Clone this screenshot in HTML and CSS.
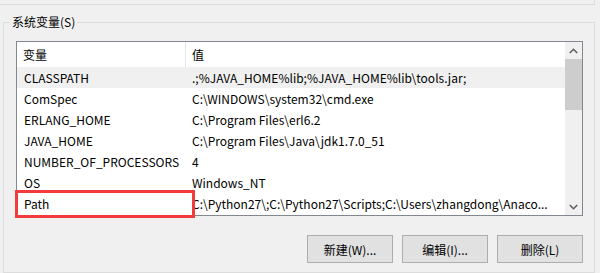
FILE: index.html
```html
<!DOCTYPE html>
<html lang="zh-CN">

<head>
    <meta charset="UTF-8">
    <title>系统变量</title>
    <link rel="stylesheet" href="styles.css">
</head>

<body>
    <!-- bottom edge of the user variables group above -->
    <div class="top-box"></div>

    <fieldset class="group">
        <legend>系统变量(S)</legend>

        <div class="list">
            <div class="list-body">
                <div class="row head">
                    <div class="col-name">变量</div>
                    <div class="col-value">值</div>
                </div>
                <div class="row selected">
                    <div class="col-name">CLASSPATH</div>
                    <div class="col-value">.;%JAVA_HOME%lib;%JAVA_HOME%lib\tools.jar;</div>
                </div>
                <div class="row">
                    <div class="col-name">ComSpec</div>
                    <div class="col-value">C:\WINDOWS\system32\cmd.exe</div>
                </div>
                <div class="row">
                    <div class="col-name">ERLANG_HOME</div>
                    <div class="col-value">C:\Program Files\erl6.2</div>
                </div>
                <div class="row">
                    <div class="col-name">JAVA_HOME</div>
                    <div class="col-value">C:\Program Files\Java\jdk1.7.0_51</div>
                </div>
                <div class="row">
                    <div class="col-name">NUMBER_OF_PROCESSORS</div>
                    <div class="col-value">4</div>
                </div>
                <div class="row">
                    <div class="col-name">OS</div>
                    <div class="col-value">Windows_NT</div>
                </div>
                <div class="row path-row">
                    <div class="col-name">Path</div>
                    <div class="col-value">C:\Python27\;C:\Python27\Scripts;C:\Users\zhangdong\Anaco...</div>
                    <!-- annotation box drawn over the row -->
                    <div class="mark"></div>
                </div>
            </div>

            <div class="scrollbar">
                <div class="arrow">
                    <svg width="9" height="6" viewBox="0 0 9 6"><path d="M0.8 5 L4.5 1.3 L8.2 5" fill="none" stroke="#606060" stroke-width="1.6"/></svg>
                </div>
                <div class="track">
                    <div class="thumb"></div>
                </div>
                <div class="arrow">
                    <svg width="9" height="6" viewBox="0 0 9 6"><path d="M0.8 1 L4.5 4.7 L8.2 1" fill="none" stroke="#606060" stroke-width="1.6"/></svg>
                </div>
            </div>
        </div>

        <div class="buttons">
            <button class="button">新建(W)...</button>
            <button class="button">编辑(I)...</button>
            <button class="button">删除(L)</button>
        </div>
    </fieldset>
</body>

</html>
```

FILE: styles.css
```css
/* General Reset */
* {
    margin: 0;
    padding: 0;
    box-sizing: border-box;
}

html {
    overflow: hidden;
}

body {
    width: 600px;
    height: 273px;
    overflow: hidden;
    background: #f0f0f0;
    font-family: 'Noto Sans CJK SC', 'Noto Sans', sans-serif;
    font-size: 12px;
    color: #000;
}

/* Group above, only its lower edge shows */
.top-box {
    width: 595px;
    height: 5px;
    border-right: 1px solid #dcdcdc;
    border-bottom: 1px solid #dcdcdc;
}

/* System variables group box */
.group {
    margin: 10px 0 0 3px;
    width: 592px;
    height: 258px;
    border: 1px solid #dcdcdc;
    padding: 12px 11px 0 12px;
}

.group legend {
    margin-left: -6px;
    padding: 0 2px;
    line-height: 14px;
}

/* List view */
.list {
    display: flex;
    width: 567px;
    height: 175px;
    border: 1px solid #828790;
    background: #fff;
}

.list-body {
    flex: 1;
    min-width: 0;
}

.row {
    position: relative;
    display: flex;
    height: 21px;
    line-height: 21px;
}

.row.head {
    height: 25px;
    line-height: 25px;
}

.row.selected {
    background: #f0f0f0;
}

.col-name {
    width: 169px;
    padding-left: 7px;
    white-space: nowrap;
}

.head .col-name {
    border-right: 1px solid #e5e5e5;
    padding-left: 6px;
}

.col-value {
    flex: 1;
    min-width: 0;
    padding-left: 6px;
    white-space: nowrap;
    overflow: hidden;
}

/* Red highlight on the Path row */
.mark {
    position: absolute;
    left: -2px;
    top: -3px;
    width: 180px;
    height: 28px;
    border: 3px solid #f23b3b;
}

/* Scrollbar */
.scrollbar {
    width: 17px;
    display: flex;
    flex-direction: column;
    background: #f0f0f0;
}

.arrow {
    height: 17px;
    display: flex;
    align-items: center;
    justify-content: center;
}

.track {
    flex: 1;
}

.thumb {
    height: 51px;
    background: #cdcdcd;
}

/* Buttons row */
.buttons {
    display: flex;
    justify-content: flex-end;
    gap: 9px;
    width: 567px;
    margin-top: 19px;
}

.button {
    width: 86px;
    height: 28px;
    border: 1px solid #adadad;
    background: #e1e1e1;
    font-family: inherit;
    font-size: 12px;
    color: #000;
}
```
